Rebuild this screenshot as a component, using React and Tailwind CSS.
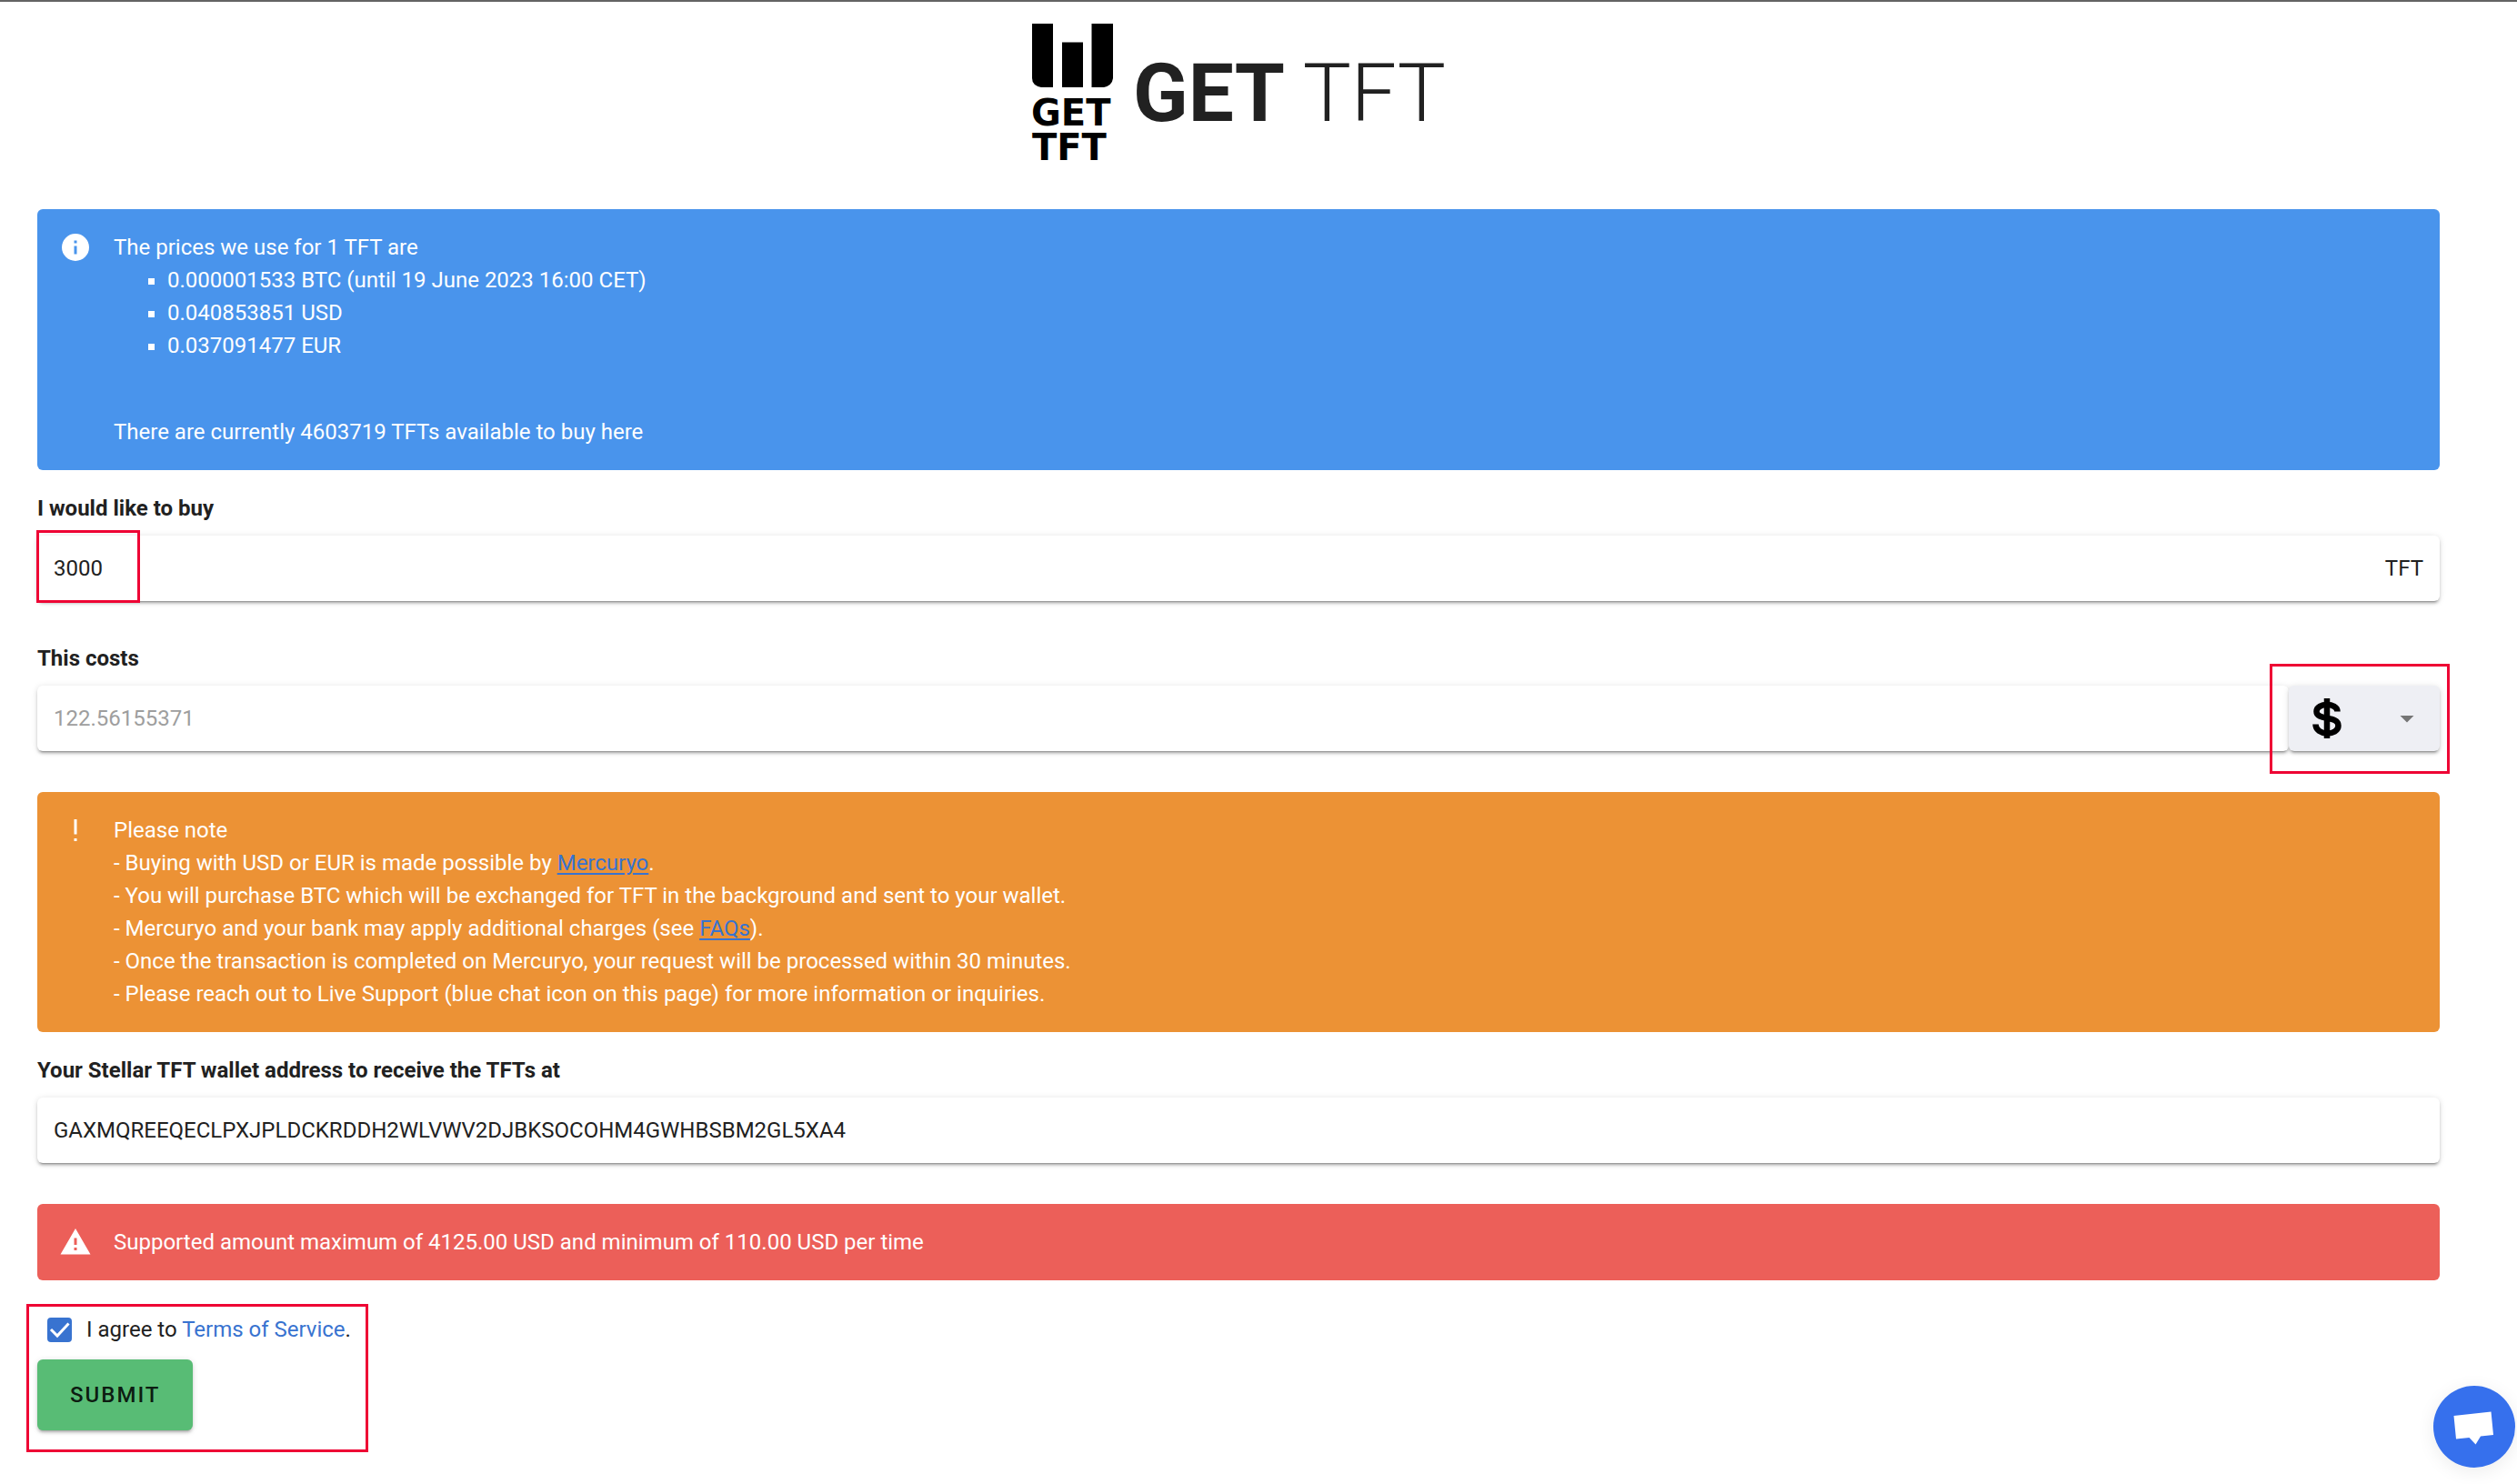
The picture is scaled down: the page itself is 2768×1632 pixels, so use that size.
import { useState } from "react";

function Alert({ tone, icon, children }) {
  return (
    <div role="alert" className={`flex rounded-md p-6 text-white ${tone}`}>
      <div className="mr-6 flex h-9 w-9 shrink-0 items-center justify-center">{icon}</div>
      <div className="min-w-0 flex-1">{children}</div>
    </div>
  );
}

const field =
  "flex h-18 items-center rounded-md bg-white shadow-[0_4px_2px_-3px_rgba(0,0,0,0.3),0_3px_3px_rgba(0,0,0,0.16),0_1px_7px_rgba(0,0,0,0.13)]";

const link = "text-[#3873d0] underline decoration-2 underline-offset-3";

function Highlight({ className }) {
  return <span aria-hidden="true" className={`pointer-events-none absolute border-3 border-[#ee0434] ${className}`} />;
}

function Logo() {
  return (
    <svg className="overflow-visible" width="92" height="154" viewBox="0 0 92 154" role="img" aria-label="Get TFT logo">
      <path d="M1 1h23v70H11Q1 69 1 61z" />
      <path d="M34 21.500h23V71H34z" />
      <path d="M66.500 1H90v60q-1 8-10 10H66.500z" />
      <text x="0" y="113" fontSize="40" fontWeight="700" fontFamily="DejaVu Sans">GET</text>
      <text x="1" y="151" fontSize="40" fontWeight="700" fontFamily="DejaVu Sans">TFT</text>
    </svg>
  );
}

export default function App() {
  const [amount, setAmount] = useState("3000");
  const [wallet, setWallet] = useState("GAXMQREEQECLPXJPLDCKRDDH2WLVWV2DJBKSOCOHM4GWHBSBM2GL5XA4");
  const [agreed, setAgreed] = useState(true);

  return (
    <div className="min-h-screen border-t-2 border-[#646464] bg-white font-['Roboto',sans-serif] text-2xl leading-9 text-[#212121]">
      <main className="pr-[85px] pl-[41px]">
        <header className="flex h-[228px] items-start justify-center gap-5 pt-[23px]">
          <Logo />
          <h1 className="pt-[33px] text-[89px] leading-[90px] font-bold">
            GET <span className="font-light">TFT</span>
          </h1>
        </header>

        <Alert
          tone="bg-[#4994ec]"
          icon={
            <svg width="36" height="36" viewBox="0 0 24 24" fill="currentColor" aria-hidden="true">
              <path d="M13 9h-2V7h2m0 10h-2v-6h2m-1-9A10 10 0 0 0 2 12a10 10 0 0 0 10 10 10 10 0 0 0 10-10A10 10 0 0 0 12 2z" />
            </svg>
          }
        >
          <p>The prices we use for 1 TFT are</p>
          <ul className="mb-[59px] list-[square] pl-[59px]">
            <li>0.000001533 BTC (until 19 June 2023 16:00 CET)</li>
            <li>0.040853851 USD</li>
            <li>0.037091477 EUR</li>
          </ul>
          <p>There are currently 4603719 TFTs available to buy here</p>
        </Alert>

        <form onSubmit={(e) => e.preventDefault()}>
          <label htmlFor="amount" className="mt-6 block font-bold">I would like to buy</label>
          <div className={`relative mt-3 px-[18px] ${field}`}>
            <input id="amount" value={amount} onChange={(e) => setAmount(e.target.value)} className="h-full min-w-0 flex-1 outline-none" />
            <span>TFT</span>
            <Highlight className="-top-1.5 -left-px h-20 w-[114px]" />
          </div>

          <label htmlFor="cost" className="mt-[45px] block font-bold">This costs</label>
          <div className="relative mt-3 flex">
            <div className={`min-w-0 flex-1 px-[18px] ${field}`}>
              <input id="cost" value="122.56155371" disabled className="h-full min-w-0 flex-1 text-[#9e9e9e] outline-none" />
            </div>
            <div className="relative flex h-18 w-[166px] items-center justify-between rounded-md bg-[#eeeff4] pr-[18px] pl-[26px] shadow-[0_4px_2px_-3px_rgba(0,0,0,0.3),0_3px_3px_rgba(0,0,0,0.16),0_1px_7px_rgba(0,0,0,0.13)]">
              <svg width="32" height="44" viewBox="0 0 32 44" fill="none" stroke="black" strokeWidth="6.500" aria-hidden="true">
                <path d="M16 0v44" />
                <path d="M27.500 14.500C27.500 4.500 4.500 4.500 4.500 14.500C4.500 25 28.500 18.500 28.500 30C28.500 41.500 3.500 41.500 3.500 28.500" />
              </svg>
              <svg width="36" height="36" viewBox="0 0 24 24" fill="#757575" aria-hidden="true">
                <path d="M7 10l5 5 5-5z" />
              </svg>
              <select aria-label="Currency" defaultValue="USD" className="absolute inset-0 cursor-pointer opacity-0">
                <option value="USD">$</option>
                <option value="EUR">€</option>
                <option value="BTC">₿</option>
              </select>
            </div>
            <Highlight className="-top-6 -right-[11px] h-[121px] w-[198px]" />
          </div>

          <div className="mt-[45px]">
            <Alert
              tone="bg-[#ec9235]"
              icon={
                <svg width="36" height="36" viewBox="0 0 24 24" fill="currentColor" aria-hidden="true">
                  <path d="M11 4h2v11h-2zM11 18h2v2h-2z" />
                </svg>
              }
            >
              <p>Please note</p>
              <p>- Buying with USD or EUR is made possible by <a href="#mercuryo" className={link}>Mercuryo</a>.</p>
              <p>- You will purchase BTC which will be exchanged for TFT in the background and sent to your wallet.</p>
              <p>- Mercuryo and your bank may apply additional charges (see <a href="#faqs" className={link}>FAQs</a>).</p>
              <p>- Once the transaction is completed on Mercuryo, your request will be processed within 30 minutes.</p>
              <p>- Please reach out to Live Support (blue chat icon on this page) for more information or inquiries.</p>
            </Alert>
          </div>

          <label htmlFor="wallet" className="mt-6 block font-bold">Your Stellar TFT wallet address to receive the TFTs at</label>
          <div className={`mt-3 px-[18px] ${field}`}>
            <input id="wallet" value={wallet} onChange={(e) => setWallet(e.target.value)} className="h-full min-w-0 flex-1 outline-none" />
          </div>

          <div className="mt-[45px]">
            <Alert
              tone="bg-[#ec5f59]"
              icon={
                <svg width="36" height="36" viewBox="0 0 24 24" fill="currentColor" aria-hidden="true">
                  <path d="M13 14h-2V9h2m0 9h-2v-2h2M1 21h22L12 2 1 21z" />
                </svg>
              }
            >
              <p>Supported amount maximum of 4125.00 USD and minimum of 110.00 USD per time</p>
            </Alert>
          </div>

          <div className="relative mt-9 w-[364px]">
            <div className="flex items-center pl-[11px]">
              <input
                id="terms"
                type="checkbox"
                checked={agreed}
                onChange={(e) => setAgreed(e.target.checked)}
                className="peer h-[27px] w-[27px] appearance-none rounded-sm border-3 border-[#3873d0] checked:bg-[#3873d0]"
              />
              <svg className="pointer-events-none -ml-[27px] hidden peer-checked:block" width="27" height="27" viewBox="0 0 27 27" fill="none" stroke="white" strokeWidth="3" aria-hidden="true">
                <path d="M4 13l7 7L23.500 6.500" />
              </svg>
              <label htmlFor="terms" className="ml-4">
                I agree to <a href="#terms-of-service" className="text-[#3873d0]">Terms of Service</a>.
              </label>
            </div>
            <button
              type="submit"
              className="mt-[15px] block h-[78px] rounded-md bg-[#58bc75] px-9 font-medium tracking-[2px] text-black/87 shadow-[0_4px_2px_-3px_rgba(0,0,0,0.2),0_3px_3px_rgba(0,0,0,0.14),0_1px_7px_rgba(0,0,0,0.12)]"
            >
              SUBMIT
            </button>
            <Highlight className="-top-2.5 -left-3 h-[163px] w-[376px]" />
          </div>
        </form>
      </main>

      <button
        type="button"
        aria-label="Open live support chat"
        className="fixed right-0.5 bottom-[18px] flex h-[90px] w-[90px] items-center justify-center rounded-full bg-[#3670ed] shadow-[0_4px_20px_rgba(0,0,0,0.08)]"
      >
        <svg width="90" height="90" viewBox="0 0 90 90" fill="white" aria-hidden="true">
          <path d="M22.500 33L63.500 28.500L66 54L52 55.500L46.500 64.500L39.500 57L25 58.500z" />
        </svg>
      </button>
    </div>
  );
}
